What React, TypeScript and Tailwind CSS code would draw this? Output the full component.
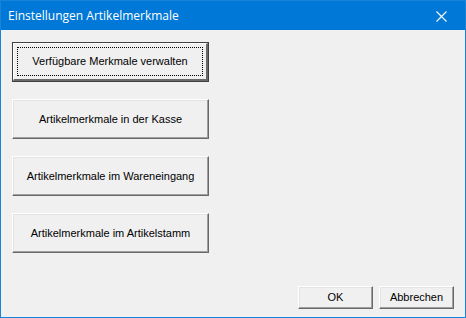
import React from 'react';

const labels = [
  'Verfügbare Merkmale verwalten',
  'Artikelmerkmale in der Kasse',
  'Artikelmerkmale im Wareneingang',
  'Artikelmerkmale im Artikelstamm',
];

function ClassicButton({ label, isDefault, className }: { label: string; isDefault?: boolean; className: string }) {
  if (isDefault) {
    return (
      <button className={`${className} border border-[#404040] bg-[#f0f0f0] p-0`}>
        <div className="h-full w-full border-t border-l border-white border-r-2 border-b-2 border-r-[#696969] border-b-[#696969] p-[3px]">
          <div className="flex h-full w-full items-center justify-center border border-dotted border-black">
            {label}
          </div>
        </div>
      </button>
    );
  }
  return (
    <button className={`${className} flex items-center justify-center border-t border-l border-white border-r border-b border-r-[#696969] border-b-[#696969] bg-[#f0f0f0] shadow-[inset_-1px_-1px_0_#a0a0a0,inset_1px_1px_0_#e3e3e3]`}>
      {label}
    </button>
  );
}

export default function App() {
  return (
    <div className="flex h-[318px] w-[466px] flex-col border border-[#1883d7] bg-[#f0f0f0] font-['Liberation_Sans',Arial,sans-serif] text-[11px] text-black">
      {/* Title bar */}
      <div className="flex h-[29px] shrink-0 items-center justify-between bg-[#0078d7] pl-[7px] pr-[18px] text-white">
        <span className="font-['Open_Sans','Noto_Sans',sans-serif] text-[12px]">Einstellungen Artikelmerkmale</span>
        <svg width="11" height="11" viewBox="0 0 11 11" className="mt-[1px]">
          <path d="M0.5 0.5 L10.5 10.5 M10.5 0.5 L0.5 10.5" stroke="white" strokeWidth="1.1" />
        </svg>
      </div>

      {/* Body */}
      <div className="flex flex-1 flex-col px-[11px] pt-[12px]">
        <div className="flex flex-col gap-[17px]">
          {labels.map((l, i) => (
            <ClassicButton key={l} label={l} isDefault={i === 0} className="h-[40px] w-[197px]" />
          ))}
        </div>
        <div className="mt-auto mb-[8px] flex justify-end gap-[6px] pr-[0px]">
          <ClassicButton label="OK" className="h-[23px] w-[75px]" />
          <ClassicButton label="Abbrechen" className="h-[23px] w-[75px]" />
        </div>
      </div>
    </div>
  );
}
